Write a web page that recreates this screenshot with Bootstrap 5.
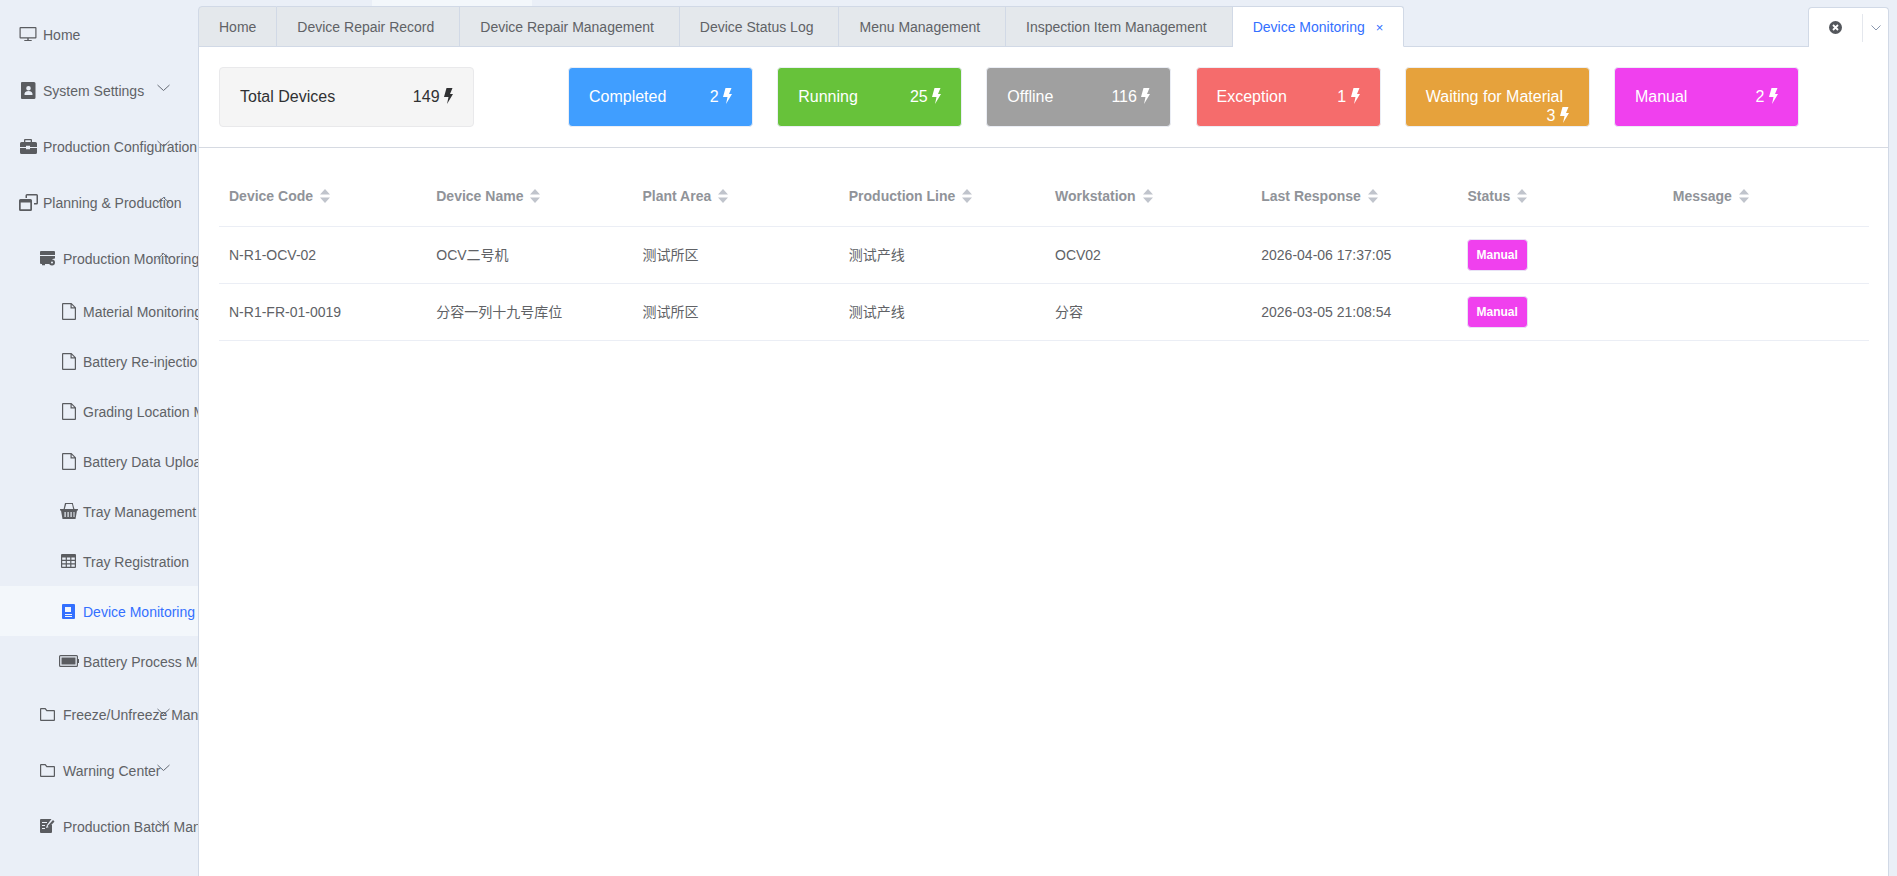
<!DOCTYPE html>
<html lang="en">
<head>
<meta charset="UTF-8">
<title>Device Monitoring</title>
<link href="https://cdn.jsdelivr.net/npm/bootstrap@5.3.0/dist/css/bootstrap.min.css" rel="stylesheet">
<style>
body { background: #eaeff7; height: 100vh; overflow: hidden; font-family: "Liberation Sans", "Noto Sans CJK SC", sans-serif; font-size: 14px; color: #606266; }
.side-menu { width: 198px; flex: 0 0 198px; padding-top: 6px; overflow: hidden; }
.side-row { position: relative; display: flex; align-items: center; white-space: nowrap; height: 56px; padding-top: 2px; }
.side-row svg.ico { flex: none; fill: #5a5c60; }
.side-row.leaf { height: 50px; }
.side-row.on { background: #f3f7fb; color: #3370ff; }
.side-row.on svg.ico { fill: #3370ff; }
.lv1 { padding-left: 19px; }
.lv2 { padding-left: 40px; }
.ico-box { flex: none; display: flex; align-items: center; margin-top: -2px; }
.lv1 .ico-box { width: 24px; }
.lv2 .ico-box { width: 23px; }
.lv3 .ico-box { width: 83px; padding-left: 54px; justify-content: center; }
.arrow { position: absolute; left: 157px; top: calc(50% - 6px); }
.main-col { width: 1691px; flex: 0 0 1691px; display: flex; flex-direction: column; }
.top-strip { height: 6px; flex: none; }
.top-strip div { width: 160px; height: 6px; margin-left: 174px; background: #f3f7fb; }
.tab-strip { height: 41px; flex: none; border-bottom: 1px solid #d1d9e6; }
.tab-one { height: 41px; padding: 0 25px 0 20px; line-height: 41px; background: #e4e8ec; border-top: 1px solid #d1d9e6; border-right: 1px solid #d1d9e6; border-bottom: 1px solid #d1d9e6; white-space: nowrap; }
.tab-one:first-child { border-left: 1px solid #d1d9e6; border-top-left-radius: 4px; padding: 0 20px; }
.tab-one.on { background: #fff; color: #3370ff; border-bottom-color: #fff; border-top-right-radius: 3px; padding-right: 20px; }
.tab-x { margin-left: 11px; font-size: 13px; }
.tab-tools { width: 81px; height: 40px; margin-top: 1px; background: #fff; border: 1px solid #d1d9e6; border-bottom: 0; border-radius: 4px 4px 0 0; }
.tool-a { width: 53px; }
.tool-b { width: 26px; height: 28px; border-left: 1px solid #e4e7ed; }
.work { flex: 1 1 auto; background: #fff; border-left: 1px solid #d1d9e6; border-right: 1px solid #d1d9e6; }
.stat-bar { padding: 20px 19px 20px 20px; gap: 24.2px; border-bottom: 1px solid #d6dae2; }
.stat { width: 185px; height: 60px; flex: none; padding: 20px 20px 0; line-height: 18.5px; font-size: 16px; color: #fff; border: 1px solid #ebeef5; border-radius: 4px; }
.stat svg { fill: currentColor; vertical-align: -2px; }
.stat-total { width: 255px; margin-right: 69.8px; background: #f5f5f5; color: #303133; border-color: #e9e9eb; }
.c-done { background: #409eff; }
.c-run { background: #67c23a; }
.c-off { background: #a0a0a0; }
.c-err { background: #f56c6c; }
.c-wait { background: #e6a23c; }
.c-man { background: #f040ee; }
.grid-wrap { padding: 18px 19px 0 20px; }
.dev-table { table-layout: fixed; width: 1650px; margin: 0; --bs-table-color: #606266; --bs-table-border-color: #ebeef5; }
.dev-table th, .dev-table td { padding: 1px 10px 0 11px; vertical-align: middle; font-size: 14px; }
.dev-table th:first-child, .dev-table td:first-child, .dev-table th:last-child { padding-left: 10px; }
.dev-table th { height: 60px; color: #909399; font-weight: 700; }
.dev-table td { height: 57px; }
.sort-mark { margin-left: 7px; vertical-align: -2px; fill: #c0c4cc; }
.man-tag { display: inline-block; height: 32px; margin: -1px 0 0 -1px; padding: 0 9px; line-height: 30px; font-size: 12px; font-weight: 700; color: #fff; background: #f040ee; border: 1px solid #e8e3f5; border-radius: 4px; }
</style>
</head>
<body class="d-flex">

<nav class="side-menu">
  <div class="side-row lv1"><span class="ico-box"><svg class="ico" width="18" height="16" viewBox="0 0 18 16"><path d="M1.5 1h15a1 1 0 0 1 1 1v9.500a1 1 0 0 1-1 1h-15a1 1 0 0 1-1-1V2a1 1 0 0 1 1-1zm.2 1.200v9.100h14.600V2.200zM8.300 12.500h1.400v1.600h3v1H5.300v-1h3z"/></svg></span>Home</div>
  <div class="side-row lv1"><span class="ico-box"><svg class="ico" width="18" height="17" viewBox="0 0 18 17"><path d="M3 0h12a1.500 1.500 0 0 1 1.500 1.500v14A1.500 1.500 0 0 1 15 17H3a1 1 0 0 1-1-1V1a1 1 0 0 1 1-1zm6.500 4a2.300 2.300 0 1 0 0 4.600 2.300 2.300 0 0 0 0-4.600zM5.500 13h8c.4-2.500-1.500-3.900-4-3.900s-4.400 1.400-4 3.900z"/></svg></span>System Settings<svg class="arrow" width="13" height="8" viewBox="0 0 13 8" fill="none" stroke="#666b75"><path d="M.5 1l6 5.500 6-5.500"/></svg></div>
  <div class="side-row lv1"><span class="ico-box"><svg class="ico" width="18" height="15" viewBox="0 0 18 15"><path d="M6 0h6a1 1 0 0 1 1 1v2h3.500A1.500 1.500 0 0 1 18 4.500V8h-7V6.800H7V8H1V4.500A1.500 1.500 0 0 1 2.500 3H5V1a1 1 0 0 1 1-1zm.3 1.300V3h5.400V1.300zM1 9h6v1.300h4V9h7v4.500a1.500 1.500 0 0 1-1.500 1.500h-14A1.500 1.500 0 0 1 1 13.500z"/></svg></span>Production Configuration<svg class="arrow" width="13" height="8" viewBox="0 0 13 8" fill="none" stroke="#666b75"><path d="M.5 1l6 5.500 6-5.500"/></svg></div>
  <div class="side-row lv1"><span class="ico-box"><svg class="ico" width="19" height="17" viewBox="0 0 19 17"><path d="M8 0h9.500A1.500 1.500 0 0 1 19 1.500V9a1.500 1.500 0 0 1-1.500 1.500H15V9h2.500V1.500H8V4H6.500V1.500A1.500 1.500 0 0 1 8 0zM1.500 5h10A1.500 1.500 0 0 1 13 6.500v9a1.500 1.500 0 0 1-1.500 1.500h-10A1.500 1.500 0 0 1 0 15.500v-9A1.500 1.500 0 0 1 1.500 5zm.2 3.500v6.800h9.600V8.500z"/></svg></span>Planning &amp; Production<svg class="arrow" width="13" height="8" viewBox="0 0 13 8" fill="none" stroke="#666b75"><path d="M.5 7L6.500 1.500 12.500 7"/></svg></div>
  <div class="side-row lv2"><span class="ico-box"><svg class="ico" width="16" height="15" viewBox="0 0 16 15"><path d="M1 0h13a1 1 0 0 1 1 1v3H0V1a1 1 0 0 1 1-1zM0 5h15v2.500a4 4 0 0 0-4 5.500H5v1.200H2V13H1a1 1 0 0 1-1-1zm12 3.500a3 3 0 1 1 0 6 3 3 0 0 1 0-6zm0 2a1 1 0 1 0 0 2 1 1 0 0 0 0-2z"/></svg></span>Production Monitoring<svg class="arrow" width="13" height="8" viewBox="0 0 13 8" fill="none" stroke="#666b75"><path d="M.5 7L6.500 1.500 12.500 7"/></svg></div>
  <div class="side-row leaf lv3"><span class="ico-box"><svg class="ico" width="14" height="17" viewBox="0 0 14 17"><path d="M1 0h8.500L14 4.500V16a1 1 0 0 1-1 1H1a1 1 0 0 1-1-1V1a1 1 0 0 1 1-1zm.2 1.200v14.600h11.600V5.500H8.500V1.200zm8.500.6v2.500h2.500z"/></svg></span>Material Monitoring</div>
  <div class="side-row leaf lv3"><span class="ico-box"><svg class="ico" width="14" height="17" viewBox="0 0 14 17"><path d="M1 0h8.500L14 4.500V16a1 1 0 0 1-1 1H1a1 1 0 0 1-1-1V1a1 1 0 0 1 1-1zm.2 1.200v14.600h11.600V5.500H8.500V1.200zm8.500.6v2.500h2.500z"/></svg></span>Battery Re-injection</div>
  <div class="side-row leaf lv3"><span class="ico-box"><svg class="ico" width="14" height="17" viewBox="0 0 14 17"><path d="M1 0h8.500L14 4.500V16a1 1 0 0 1-1 1H1a1 1 0 0 1-1-1V1a1 1 0 0 1 1-1zm.2 1.200v14.600h11.600V5.500H8.500V1.200zm8.500.6v2.500h2.500z"/></svg></span>Grading Location Management</div>
  <div class="side-row leaf lv3"><span class="ico-box"><svg class="ico" width="14" height="17" viewBox="0 0 14 17"><path d="M1 0h8.500L14 4.500V16a1 1 0 0 1-1 1H1a1 1 0 0 1-1-1V1a1 1 0 0 1 1-1zm.2 1.200v14.600h11.600V5.500H8.500V1.200zm8.500.6v2.500h2.500z"/></svg></span>Battery Data Upload</div>
  <div class="side-row leaf lv3"><span class="ico-box"><svg class="ico" width="18" height="16" viewBox="0 0 18 16"><path d="M5 0h8v1H6.200L4.800 6H3.600zM13 1l1.400 5h-1.200L12 1zM0 6h18v1.500h-1L15.500 16h-13L1 7.500H0zm4.500 3v5h1.200V9zm3 0v5h1.200V9zm3 0v5h1.200V9zm3 0v5h1V9z"/></svg></span>Tray Management</div>
  <div class="side-row leaf lv3"><span class="ico-box"><svg class="ico" width="15" height="14" viewBox="0 0 15 14"><path d="M1 0h13a1 1 0 0 1 1 1v12a1 1 0 0 1-1 1H1a1 1 0 0 1-1-1V1a1 1 0 0 1 1-1zm.2 3.500v2.300h3.500V3.500zm4.700 0v2.300h3.300V3.500zm4.500 0v2.300h3.400V3.500zM1.200 7v2.300h3.500V7zm4.700 0v2.300h3.300V7zm4.500 0v2.300h3.400V7zm-9.200 3.500v2.300h3.500v-2.300zm4.700 0v2.300h3.300v-2.300zm4.500 0v2.300h3.400v-2.300z"/></svg></span>Tray Registration</div>
  <div class="side-row leaf lv3 on"><span class="ico-box"><svg class="ico" width="13" height="15" viewBox="0 0 13 15"><path d="M1 0h11a1 1 0 0 1 1 1v13a1 1 0 0 1-1 1H1a1 1 0 0 1-1-1V1a1 1 0 0 1 1-1zm2 3v5h6V3zm0 7v1h7v-1zm0 2v1h7v-1z"/></svg></span>Device Monitoring</div>
  <div class="side-row leaf lv3"><span class="ico-box"><svg class="ico" width="20" height="12" viewBox="0 0 20 12"><path d="M1.500 0h16A1.500 1.500 0 0 1 19 1.500V4h1v4h-1v2.500a1.500 1.500 0 0 1-1.500 1.500h-16A1.500 1.500 0 0 1 0 10.500v-9A1.500 1.500 0 0 1 1.500 0zm-.3 1.200v9.600h16.600V1.200zM2.500 2.500h14v7h-14z"/></svg></span>Battery Process Management</div>
  <div class="side-row lv2"><span class="ico-box"><svg class="ico" width="15" height="13" viewBox="0 0 15 13"><path d="M1 0h4.500l1.600 2H14a1 1 0 0 1 1 1v9a1 1 0 0 1-1 1H1a1 1 0 0 1-1-1V1a1 1 0 0 1 1-1zm.2 1.200v10.600h12.600V3.200H6.500L4.900 1.200z"/></svg></span>Freeze/Unfreeze Management<svg class="arrow" width="13" height="8" viewBox="0 0 13 8" fill="none" stroke="#666b75"><path d="M.5 1l6 5.500 6-5.500"/></svg></div>
  <div class="side-row lv2"><span class="ico-box"><svg class="ico" width="15" height="13" viewBox="0 0 15 13"><path d="M1 0h4.500l1.600 2H14a1 1 0 0 1 1 1v9a1 1 0 0 1-1 1H1a1 1 0 0 1-1-1V1a1 1 0 0 1 1-1zm.2 1.200v10.600h12.600V3.200H6.500L4.900 1.200z"/></svg></span>Warning Center<svg class="arrow" width="13" height="8" viewBox="0 0 13 8" fill="none" stroke="#666b75"><path d="M.5 1l6 5.500 6-5.500"/></svg></div>
  <div class="side-row lv2"><span class="ico-box"><svg class="ico" width="15" height="14" viewBox="0 0 15 14"><path d="M1 0h10.500L7 6 6 9l3-1 3-3.500V13a1 1 0 0 1-1 1H1a1 1 0 0 1-1-1V1a1 1 0 0 1 1-1zm1 3v1h5V3zm0 3v1h3V6zm0 3v1h3V9zm11-8l1.500 1.500L9 8.500 7.500 7z"/></svg></span>Production Batch Management<svg class="arrow" width="13" height="8" viewBox="0 0 13 8" fill="none" stroke="#666b75"><path d="M.5 1l6 5.500 6-5.500"/></svg></div>
</nav>

<div class="main-col">
  <div class="top-strip"><div></div></div>
  <div class="tab-strip d-flex">
    <div class="tab-one">Home</div>
    <div class="tab-one">Device Repair Record</div>
    <div class="tab-one">Device Repair Management</div>
    <div class="tab-one">Device Status Log</div>
    <div class="tab-one">Menu Management</div>
    <div class="tab-one">Inspection Item Management</div>
    <div class="tab-one on">Device Monitoring<span class="tab-x">×</span></div>
    <div class="tab-tools ms-auto d-flex align-items-center">
      <div class="tool-a d-flex justify-content-center"><svg width="13" height="13" viewBox="0 0 13 13"><circle cx="6.500" cy="6.500" r="6.500" fill="#54575c"/><path d="M4 4l5 5M9 4l-5 5" stroke="#fff" stroke-width="1.800"/></svg></div>
      <div class="tool-b d-flex justify-content-center align-items-center"><svg width="10" height="6" viewBox="0 0 10 6" fill="none" stroke="#8a97ad"><path d="M.5 .5L5 5 9.500 .5"/></svg></div>
    </div>
  </div>
  <div class="work">
    <div class="stat-bar d-flex">
      <div class="stat stat-total">Total Devices<span class="float-end">149 <svg width="9" height="16" viewBox="0 0 9 16"><path d="M2.500 0h6L6 6h3L3 16l1.500-7H0z"/></svg></span></div>
      <div class="stat c-done">Completed<span class="float-end">2 <svg width="9" height="16" viewBox="0 0 9 16"><path d="M2.500 0h6L6 6h3L3 16l1.500-7H0z"/></svg></span></div>
      <div class="stat c-run">Running<span class="float-end">25 <svg width="9" height="16" viewBox="0 0 9 16"><path d="M2.500 0h6L6 6h3L3 16l1.500-7H0z"/></svg></span></div>
      <div class="stat c-off">Offline<span class="float-end">116 <svg width="9" height="16" viewBox="0 0 9 16"><path d="M2.500 0h6L6 6h3L3 16l1.500-7H0z"/></svg></span></div>
      <div class="stat c-err">Exception<span class="float-end">1 <svg width="9" height="16" viewBox="0 0 9 16"><path d="M2.500 0h6L6 6h3L3 16l1.500-7H0z"/></svg></span></div>
      <div class="stat c-wait">Waiting for Material<span class="float-end">3 <svg width="9" height="16" viewBox="0 0 9 16"><path d="M2.500 0h6L6 6h3L3 16l1.500-7H0z"/></svg></span></div>
      <div class="stat c-man">Manual<span class="float-end">2 <svg width="9" height="16" viewBox="0 0 9 16"><path d="M2.500 0h6L6 6h3L3 16l1.500-7H0z"/></svg></span></div>
    </div>
    <div class="grid-wrap">
      <table class="table dev-table">
        <thead>
          <tr>
            <th>Device Code<svg class="sort-mark" width="10" height="14" viewBox="0 0 10 14"><path d="M5 0l5 5.500H0zM5 14l5-5.500H0z"/></svg></th>
            <th>Device Name<svg class="sort-mark" width="10" height="14" viewBox="0 0 10 14"><path d="M5 0l5 5.500H0zM5 14l5-5.500H0z"/></svg></th>
            <th>Plant Area<svg class="sort-mark" width="10" height="14" viewBox="0 0 10 14"><path d="M5 0l5 5.500H0zM5 14l5-5.500H0z"/></svg></th>
            <th>Production Line<svg class="sort-mark" width="10" height="14" viewBox="0 0 10 14"><path d="M5 0l5 5.500H0zM5 14l5-5.500H0z"/></svg></th>
            <th>Workstation<svg class="sort-mark" width="10" height="14" viewBox="0 0 10 14"><path d="M5 0l5 5.500H0zM5 14l5-5.500H0z"/></svg></th>
            <th>Last Response<svg class="sort-mark" width="10" height="14" viewBox="0 0 10 14"><path d="M5 0l5 5.500H0zM5 14l5-5.500H0z"/></svg></th>
            <th>Status<svg class="sort-mark" width="10" height="14" viewBox="0 0 10 14"><path d="M5 0l5 5.500H0zM5 14l5-5.500H0z"/></svg></th>
            <th>Message<svg class="sort-mark" width="10" height="14" viewBox="0 0 10 14"><path d="M5 0l5 5.500H0zM5 14l5-5.500H0z"/></svg></th>
          </tr>
        </thead>
        <tbody>
          <tr><td>N-R1-OCV-02</td><td>OCV二号机</td><td>测试所区</td><td>测试产线</td><td>OCV02</td><td>2026-04-06 17:37:05</td><td><span class="man-tag">Manual</span></td><td></td></tr>
          <tr><td>N-R1-FR-01-0019</td><td>分容一列十九号库位</td><td>测试所区</td><td>测试产线</td><td>分容</td><td>2026-03-05 21:08:54</td><td><span class="man-tag">Manual</span></td><td></td></tr>
        </tbody>
      </table>
    </div>
  </div>
</div>

<script src="https://cdn.jsdelivr.net/npm/bootstrap@5.3.0/dist/js/bootstrap.bundle.min.js"></script>
</body>
</html>
